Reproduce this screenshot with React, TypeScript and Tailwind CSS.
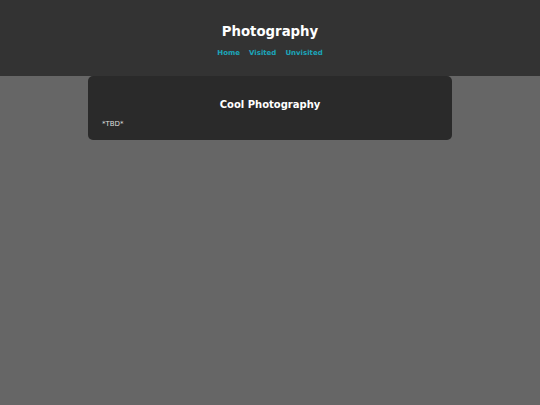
export default function App() {
  return (
    <div className="min-h-[405px] bg-[#666666] font-['DejaVu_Sans',sans-serif]">
      <header className="flex h-[76px] flex-col items-center bg-[#333333] pt-[23px]">
        <h1 className="text-[13.3px] font-bold leading-[18px] text-white">Photography</h1>
        <nav className="mt-[7px] flex gap-[9px] text-[7px] font-bold leading-[10px] text-[#1ba6bb]">
          <a href="#">Home</a>
          <a href="#">Visited</a>
          <a href="#">Unvisited</a>
        </nav>
      </header>
      <main className="mx-auto w-[364px] rounded-[5px] bg-[#2a2a2a] px-[14px] pt-[22px] pb-[11px] text-white">
        <h2 className="text-center text-[10px] font-bold leading-[14px]">Cool Photography</h2>
        <p className="mt-[7px] text-[7px] leading-[10px] text-[#dddddd]">*TBD*</p>
      </main>
    </div>
  );
}
